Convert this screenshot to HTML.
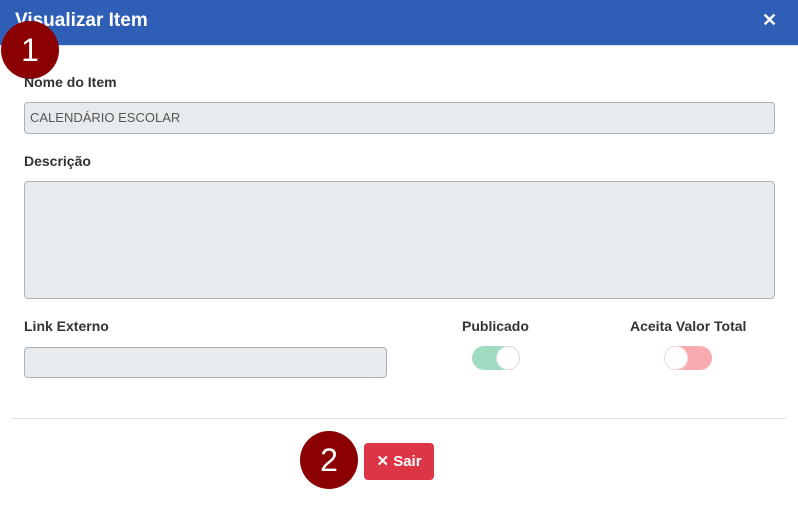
<!DOCTYPE html><html><head><style>
body{margin:0;width:798px;height:505px;background:#fff;font-family:"Liberation Sans",sans-serif;position:relative;overflow:hidden}
.a{position:absolute}
.hdr{left:0;top:0;width:798px;height:45px;background:#2f5eb6;border-bottom:1px solid #d9dde4}
.t{left:15px;top:10px;color:#fff;font-size:19px;font-weight:bold}
.x{left:762px;top:10px;color:#fff;font-size:18px;font-weight:bold}
.lb{font-size:14px;font-weight:bold;color:#333}
.in{background:#e8ebee;border:1px solid #adb1b6;border-radius:4px;box-sizing:border-box}
.b{background:#8b0000;color:#fff;border-radius:50%;width:58px;height:58px;font-size:32px;text-align:center;line-height:58px}
.tg{width:48px;height:24px;border-radius:12px}
.k{width:24px;height:24px;border-radius:50%;background:#fff;box-sizing:border-box;top:0}
</style></head><body>
<div class="a hdr"></div>
<div class="a t">Visualizar Item</div>
<div class="a x">✕</div>
<div class="a b" style="left:1px;top:21px">1</div>
<div class="a lb" style="left:24px;top:74px">Nome do Item</div>
<div class="a in" style="left:24px;top:102px;width:751px;height:32px;font-size:13px;color:#555;padding:7px 5px">CALENDÁRIO ESCOLAR</div>
<div class="a lb" style="left:24px;top:153px">Descrição</div>
<div class="a in" style="left:24px;top:181px;width:751px;height:118px"></div>
<div class="a lb" style="left:24px;top:318px">Link Externo</div>
<div class="a in" style="left:24px;top:347px;width:363px;height:31px"></div>
<div class="a lb" style="left:462px;top:318px">Publicado</div>
<div class="a lb" style="left:630px;top:318px">Aceita Valor Total</div>
<div class="a tg" style="left:472px;top:346px;background:#9fdcc1"><div class="a k" style="left:24px;border:1px solid #dde"></div></div>
<div class="a tg" style="left:664px;top:346px;background:#f8abb0"><div class="a k" style="left:0;border:1px solid #f5dde0"></div></div>
<div class="a" style="left:12px;top:418px;width:774px;height:1px;background:#dfe1e4"></div>
<div class="a b" style="left:300px;top:431px">2</div>
<div class="a" style="left:364px;top:443px;width:70px;height:37px;background:#dc3545;border-radius:4px;color:#fff;font-size:15px;font-weight:bold;text-align:center;line-height:37px">✕ Sair</div>
</body></html>
